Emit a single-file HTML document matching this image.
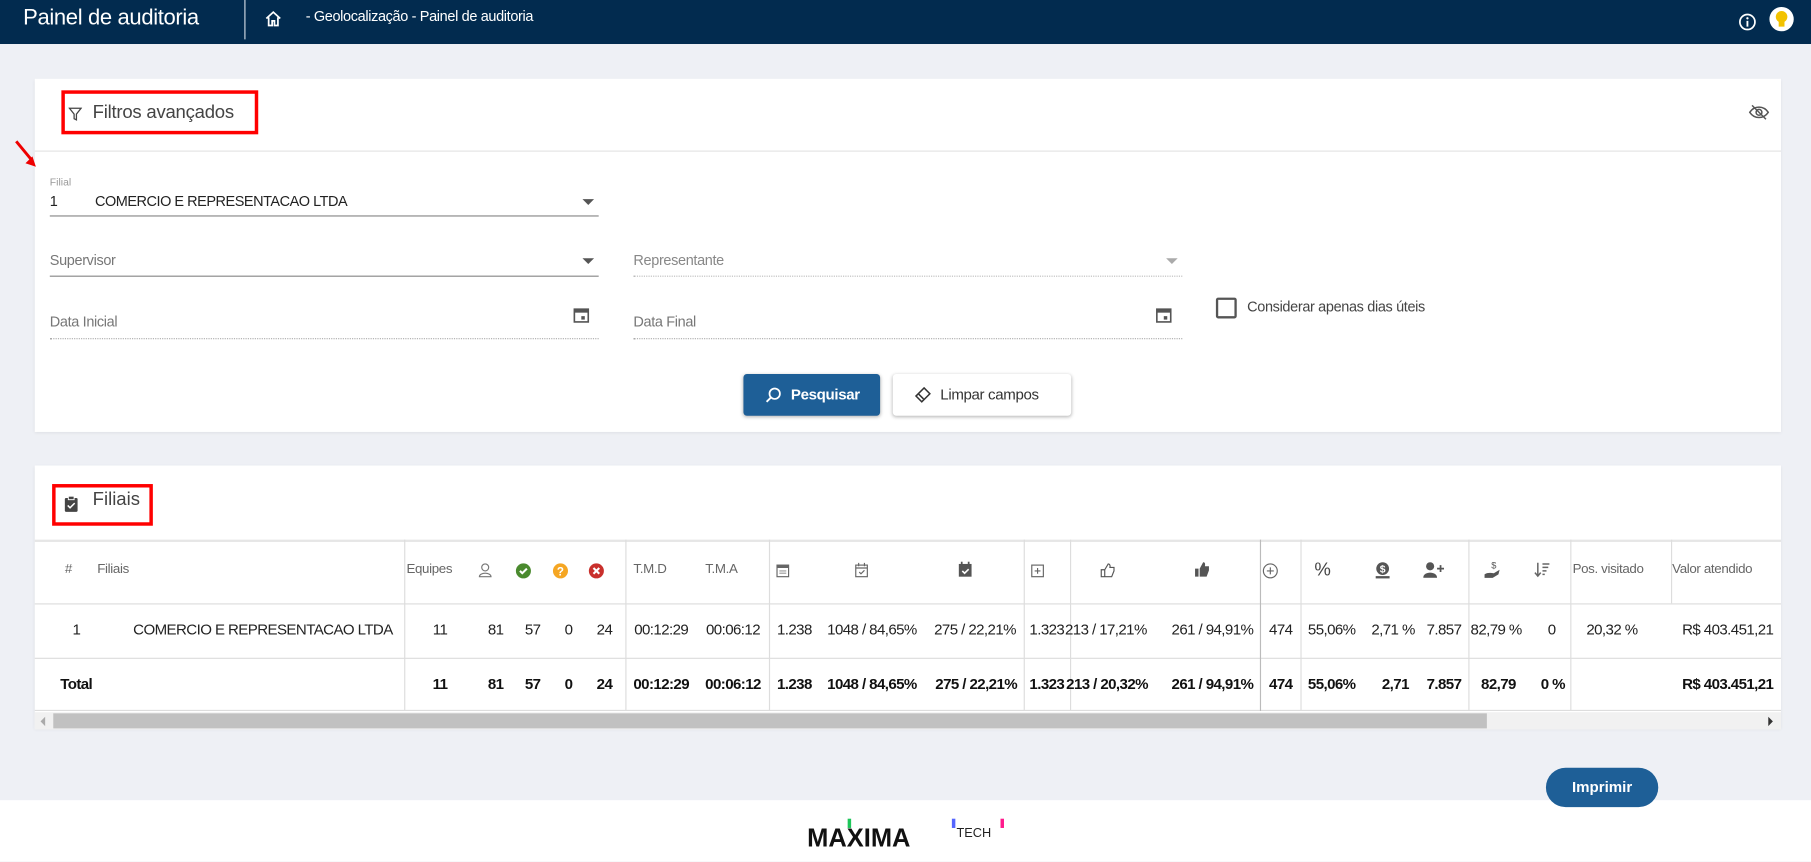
<!DOCTYPE html>
<html><head><meta charset="utf-8"><style>
*{margin:0;padding:0;box-sizing:border-box}
html,body{width:1811px;height:861px;overflow:hidden;background:#eef0f5;font-family:"Liberation Sans",sans-serif}
#w{position:absolute;left:0;top:0;width:1564px;height:744px;transform:scale(1.158);transform-origin:0 0;background:#eef0f5}
.a{position:absolute;white-space:nowrap}
.c{position:absolute;width:120px;text-align:center;white-space:nowrap}
.hd{font-size:11.5px;color:#666;letter-spacing:-0.3px}
.r1{font-size:13px;color:#222;letter-spacing:-0.5px}
.r2{font-size:13px;color:#111;font-weight:bold;letter-spacing:-0.5px}
.vl{position:absolute;width:1px;background:#ddd;top:466px;height:148px}
</style></head><body><div id="w">
<!-- header -->
<div class="a" style="left:0;top:0;width:1564px;height:38px;background:#022b4f"></div>
<div class="a" style="left:20px;top:5px;font-size:19px;color:#fff;letter-spacing:-0.3px">Painel de auditoria</div>
<div class="a" style="left:211px;top:0;width:1px;height:34px;background:#cfd8e3"></div>
<svg class="a" style="left:228px;top:8px" width="16" height="16" viewBox="0 0 16 16"><path d="M2 8L8 2.5 14 8M4 7v7h3v-4h2v4h3V7" fill="none" stroke="#fff" stroke-width="1.5"/></svg>
<div class="a" style="left:264px;top:7px;font-size:12.5px;color:#fff;letter-spacing:-0.3px">- Geolocalização - Painel de auditoria</div>
<svg class="a" style="left:1501px;top:11px" width="16" height="16"><circle cx="8" cy="8" r="6.5" fill="none" stroke="#fff" stroke-width="1.5"/><rect x="7.2" y="7" width="1.6" height="5" fill="#fff"/><circle cx="8" cy="4.8" r="1" fill="#fff"/></svg>
<div class="a" style="left:1528px;top:6px;width:21px;height:21px;border-radius:50%;background:#fff"></div>
<svg class="a" style="left:1532px;top:9px" width="13" height="15"><circle cx="6.5" cy="5.5" r="5" fill="#f2c200"/><rect x="4" y="9" width="5" height="5" fill="#f2c200"/></svg>

<!-- card 1 -->
<div class="a" style="left:30px;top:68px;width:1508px;height:305px;background:#fff;box-shadow:0 1px 3px rgba(0,0,0,.08)"></div>
<div class="a" style="left:30px;top:130px;width:1508px;height:1px;background:#e3e3e3"></div>
<div class="a" style="left:53px;top:78px;width:170px;height:38px;border:3px solid #f00"></div>
<svg class="a" style="left:59px;top:92px" width="12" height="13"><path d="M1 1.5h10L7 6.5v5l-2-1V6.5z" fill="none" stroke="#444" stroke-width="1.1"/></svg>
<div class="a" style="left:80px;top:89px;font-size:16px;color:#444;letter-spacing:-0.2px">Filtros avançados</div>
<svg class="a" style="left:1510px;top:90px" width="18" height="14"><path d="M1 7c4-6 12-6 16 0c-4 6-12 6-16 0z" fill="none" stroke="#555" stroke-width="1.3"/><circle cx="9" cy="7" r="2.5" fill="none" stroke="#555" stroke-width="1.3"/><path d="M3 1l12 12" stroke="#555" stroke-width="1.3"/></svg>
<svg class="a" style="left:12px;top:120px" width="22" height="26"><path d="M2 2l14 17" stroke="#e00" stroke-width="2.5"/><path d="M19 24l-9-3 6-6z" fill="#e00"/></svg>
<div class="a" style="left:43px;top:152px;font-size:9px;color:#999">Filial</div>
<div class="a" style="left:43px;top:167px;font-size:12.5px;color:#222">1</div>
<div class="a" style="left:82px;top:167px;font-size:12.5px;color:#222;letter-spacing:-0.4px">COMERCIO E REPRESENTACAO LTDA</div>
<div class="a" style="left:503px;top:172px;border:5px solid transparent;border-top:5px solid #555"></div>
<div class="a" style="left:43px;top:186px;width:474px;height:1px;background:#888"></div>
<div class="a" style="left:43px;top:218px;font-size:12.5px;color:#777;letter-spacing:-0.3px">Supervisor</div>
<div class="a" style="left:503px;top:223px;border:5px solid transparent;border-top:5px solid #555"></div>
<div class="a" style="left:43px;top:238px;width:474px;height:1px;background:#888"></div>
<div class="a" style="left:547px;top:218px;font-size:12.5px;color:#888;letter-spacing:-0.3px">Representante</div>
<div class="a" style="left:1007px;top:223px;border:5px solid transparent;border-top:5px solid #aaa"></div>
<div class="a" style="left:547px;top:238px;width:474px;height:0;border-top:1px dotted #bbb"></div>
<div class="a" style="left:43px;top:271px;font-size:12.5px;color:#777;letter-spacing:-0.3px">Data Inicial</div>
<div class="a" style="left:43px;top:292px;width:474px;height:0;border-top:1px dotted #aaa"></div>
<div class="a" style="left:547px;top:271px;font-size:12.5px;color:#777;letter-spacing:-0.3px">Data Final</div>
<div class="a" style="left:547px;top:292px;width:474px;height:0;border-top:1px dotted #aaa"></div>
<svg class="a" style="left:495px;top:265px" width="14" height="14"><rect x="1" y="2" width="12" height="11" fill="none" stroke="#555" stroke-width="1.4"/><rect x="1" y="2" width="12" height="3" fill="#555"/><rect x="7" y="8" width="3" height="3" fill="#555"/></svg>
<svg class="a" style="left:998px;top:265px" width="14" height="14"><rect x="1" y="2" width="12" height="11" fill="none" stroke="#555" stroke-width="1.4"/><rect x="1" y="2" width="12" height="3" fill="#555"/><rect x="7" y="8" width="3" height="3" fill="#555"/></svg>
<div class="a" style="left:1050px;top:257px;width:18px;height:18px;border:2px solid #555;border-radius:2px"></div>
<div class="a" style="left:1077px;top:258px;font-size:12.5px;color:#444;letter-spacing:-0.3px">Considerar apenas dias úteis</div>
<div class="a" style="left:642px;top:323px;width:118px;height:36px;background:#1e5f97;border-radius:3px;box-shadow:0 1px 3px rgba(0,0,0,.3)"></div>
<svg class="a" style="left:661px;top:334px" width="14" height="14"><circle cx="8" cy="6" r="4.5" fill="none" stroke="#fff" stroke-width="1.5"/><path d="M5 9l-4 4" stroke="#fff" stroke-width="1.6"/></svg>
<div class="a" style="left:683px;top:333px;font-size:13px;color:#fff;font-weight:bold;letter-spacing:-0.3px">Pesquisar</div>
<div class="a" style="left:771px;top:323px;width:154px;height:36px;background:#fff;border-radius:3px;box-shadow:0 1px 3px rgba(0,0,0,.3)"></div>
<svg class="a" style="left:790px;top:334px" width="14" height="14"><path d="M8 1l5 5-7 7-5-5z M3.5 6.5l4 4" fill="none" stroke="#333" stroke-width="1.3"/></svg>
<div class="a" style="left:812px;top:333px;font-size:13px;color:#333;letter-spacing:-0.3px">Limpar campos</div>

<!-- card 2 -->
<div class="a" style="left:30px;top:402px;width:1508px;height:227px;background:#fff;box-shadow:0 1px 3px rgba(0,0,0,.08)"></div>
<div class="a" style="left:45px;top:418px;width:87px;height:36px;border:3px solid #f00"></div>
<svg class="a" style="left:55px;top:428px" width="13" height="15"><rect x="1" y="2" width="11" height="12" rx="1" fill="#444"/><rect x="4" y="0.5" width="5" height="3" fill="#444" stroke="#fff" stroke-width=".8"/><path d="M3.5 8.5l2 2 4-4" fill="none" stroke="#fff" stroke-width="1.3"/></svg>
<div class="a" style="left:80px;top:423px;font-size:16px;color:#444">Filiais</div>
<div class="a" style="left:30px;top:466px;width:1508px;height:2px;background:#e6e6e6"></div>
<div class="a" style="left:30px;top:521px;width:1508px;height:1px;background:#ddd"></div>
<div class="a" style="left:30px;top:568px;width:1508px;height:1px;background:#ddd"></div>
<div class="a" style="left:30px;top:613px;width:1508px;height:1px;background:#ddd"></div>
<div class="vl" style="left:349px"></div><div class="vl" style="left:540px"></div><div class="vl" style="left:664px"></div><div class="vl" style="left:884px"></div><div class="vl" style="left:924px"></div><div class="vl" style="left:1088px;background:#bbb"></div><div class="vl" style="left:1123px"></div><div class="vl" style="left:1268px"></div><div class="vl" style="left:1356px"></div><div class="vl" style="left:1443px;height:55px"></div>
<!-- header row -->
<div class="a hd" style="left:56px;top:486px">#</div>
<div class="a hd" style="left:84px;top:486px">Filiais</div>
<div class="a hd" style="left:351px;top:486px">Equipes</div>
<svg class="a" style="left:413px;top:486px" width="12" height="13"><circle cx="6" cy="4" r="3" fill="none" stroke="#777"/><path d="M1 12c0-4 10-4 10 0z" fill="none" stroke="#777"/></svg>
<svg class="a" style="left:445px;top:486px" width="14" height="14"><circle cx="7" cy="7" r="6.5" fill="#4a8a2e"/><path d="M4 7l2 2 4-4" stroke="#fff" stroke-width="1.8" fill="none"/></svg>
<svg class="a" style="left:477px;top:486px" width="14" height="14"><circle cx="7" cy="7" r="6.5" fill="#f5a623"/><text x="7" y="11" font-size="10" font-weight="bold" fill="#fff" text-anchor="middle" font-family="Liberation Sans">?</text></svg>
<svg class="a" style="left:508px;top:486px" width="14" height="14"><circle cx="7" cy="7" r="6.5" fill="#c9302c"/><path d="M4.5 4.5l5 5M9.5 4.5l-5 5" stroke="#fff" stroke-width="1.8"/></svg>
<div class="a hd" style="left:547px;top:486px">T.M.D</div>
<div class="a hd" style="left:609px;top:486px">T.M.A</div>
<svg class="a" style="left:670px;top:487px" width="12" height="12"><rect x="1" y="1" width="10" height="10" fill="none" stroke="#666"/><rect x="1" y="1" width="10" height="2.5" fill="#666"/><path d="M3 6h6M3 8h6" stroke="#999"/></svg>
<svg class="a" style="left:738px;top:486px" width="12" height="13"><rect x="1" y="2" width="10" height="10" fill="none" stroke="#666"/><path d="M1 4.5h10M3.5 0v3M8.5 0v3M4 8l1.5 1.5 3-3" stroke="#666" fill="none"/></svg>
<svg class="a" style="left:827px;top:485px" width="13" height="14"><rect x="1" y="2" width="11" height="11" fill="#555"/><path d="M3.5 0v3M9.5 0v3" stroke="#555" stroke-width="1.5"/><path d="M4 8l2 2 3.5-3.5" stroke="#fff" stroke-width="1.4" fill="none"/></svg>
<svg class="a" style="left:890px;top:487px" width="12" height="12"><rect x="1" y="1" width="10" height="10" fill="none" stroke="#666"/><path d="M6 3.5v5M3.5 6h5" stroke="#666"/></svg>
<svg class="a" style="left:950px;top:486px" width="13" height="13"><path d="M1 6h3v6H1zM4 6l3-5c1 0 2 1 1.5 3H12v3l-2 5H4" fill="none" stroke="#555"/></svg>
<svg class="a" style="left:1031px;top:485px" width="14" height="14"><path d="M1 6h3v7H1zM5 6l3-5.5c1.5 0 2 1 1.5 3.5H13v3.5l-2 5.5H5z" fill="#555"/></svg>
<svg class="a" style="left:1090px;top:486px" width="14" height="14"><circle cx="7" cy="7" r="6" fill="none" stroke="#666"/><path d="M7 4v6M4 7h6" stroke="#666"/></svg>
<div class="a" style="left:1135px;top:484px;font-size:16px;color:#444">%</div>
<svg class="a" style="left:1187px;top:485px" width="14" height="15"><circle cx="7" cy="6" r="5.5" fill="#555"/><text x="7" y="9.5" font-size="9" font-weight="bold" fill="#fff" text-anchor="middle" font-family="Liberation Sans">$</text><rect x="1" y="12.5" width="12" height="2" fill="#555"/></svg>
<svg class="a" style="left:1229px;top:485px" width="18" height="14"><circle cx="6" cy="4" r="3.5" fill="#555"/><path d="M0 14c0-6 12-6 12 0z" fill="#555"/><path d="M15 3v6M12 6h6" stroke="#555" stroke-width="1.5"/></svg>
<svg class="a" style="left:1281px;top:484px" width="16" height="16"><path d="M1 12c3-2 6-1 8-1l5-3-1 4-5 3H1z" fill="#555"/><text x="9" y="7" font-size="8" fill="#555" text-anchor="middle" font-family="Liberation Sans">$</text></svg>
<svg class="a" style="left:1325px;top:485px" width="14" height="14"><path d="M3 1v11M0.5 9.5L3 12.5 5.5 9.5" stroke="#666" fill="none" stroke-width="1.3"/><path d="M7 2h6M7 5h5M7 8h3.5M7 11h2" stroke="#666" stroke-width="1.3"/></svg>
<div class="a hd" style="left:1358px;top:486px">Pos. visitado</div>
<div class="a hd" style="left:1444px;top:486px">Valor atendido</div>
<!-- row1 -->
<div class="c r1" style="left:6px;top:536px">1</div>
<div class="a r1" style="left:115px;top:536px">COMERCIO E REPRESENTACAO LTDA</div>
<div class="c r1" style="left:320px;top:536px">11</div><div class="c r1" style="left:368px;top:536px">81</div><div class="c r1" style="left:400px;top:536px">57</div><div class="c r1" style="left:431px;top:536px">0</div><div class="c r1" style="left:462px;top:536px">24</div>
<div class="c r1" style="left:511px;top:536px">00:12:29</div><div class="c r1" style="left:573px;top:536px">00:06:12</div><div class="c r1" style="left:626px;top:536px">1.238</div><div class="c r1" style="left:693px;top:536px">1048 / 84,65%</div><div class="c r1" style="left:782px;top:536px">275 / 22,21%</div><div class="c r1" style="left:844px;top:536px">1.323</div><div class="c r1" style="left:895px;top:536px">213 / 17,21%</div><div class="c r1" style="left:987px;top:536px">261 / 94,91%</div><div class="c r1" style="left:1046px;top:536px">474</div><div class="c r1" style="left:1090px;top:536px">55,06%</div><div class="c r1" style="left:1143px;top:536px">2,71 %</div><div class="c r1" style="left:1187px;top:536px">7.857</div><div class="c r1" style="left:1232px;top:536px">82,79 %</div><div class="c r1" style="left:1280px;top:536px">0</div><div class="c r1" style="left:1332px;top:536px">20,32 %</div><div class="c r1" style="left:1432px;top:536px">R$ 403.451,21</div>
<!-- total -->
<div class="a r2" style="left:52px;top:583px">Total</div>
<div class="c r2" style="left:320px;top:583px">11</div><div class="c r2" style="left:368px;top:583px">81</div><div class="c r2" style="left:400px;top:583px">57</div><div class="c r2" style="left:431px;top:583px">0</div><div class="c r2" style="left:462px;top:583px">24</div>
<div class="c r2" style="left:511px;top:583px">00:12:29</div><div class="c r2" style="left:573px;top:583px">00:06:12</div><div class="c r2" style="left:626px;top:583px">1.238</div><div class="c r2" style="left:693px;top:583px">1048 / 84,65%</div><div class="c r2" style="left:783px;top:583px">275 / 22,21%</div><div class="c r2" style="left:844px;top:583px">1.323</div><div class="c r2" style="left:896px;top:583px">213 / 20,32%</div><div class="c r2" style="left:987px;top:583px">261 / 94,91%</div><div class="c r2" style="left:1046px;top:583px">474</div><div class="c r2" style="left:1090px;top:583px">55,06%</div><div class="c r2" style="left:1145px;top:583px">2,71</div><div class="c r2" style="left:1187px;top:583px">7.857</div><div class="c r2" style="left:1234px;top:583px">82,79</div><div class="c r2" style="left:1281px;top:583px">0 %</div><div class="c r2" style="left:1432px;top:583px">R$ 403.451,21</div>
<!-- scrollbar -->
<div class="a" style="left:30px;top:615px;width:1508px;height:15px;background:#f1f1f1"></div>
<div class="a" style="left:46px;top:616px;width:1238px;height:13px;background:#c1c1c1"></div>
<div class="a" style="left:35px;top:619px;border:4px solid transparent;border-right:4px solid #aaa;border-left:0"></div>
<div class="a" style="left:1527px;top:619px;border:4px solid transparent;border-left:4px solid #333;border-right:0"></div>

<!-- footer -->
<div class="a" style="left:0;top:691px;width:1564px;height:53px;background:#fff"></div>
<div class="a" style="left:1335px;top:663px;width:97px;height:34px;background:#1e5f97;border-radius:17px;color:#fff;font-size:13px;font-weight:bold;text-align:center;line-height:34px">Imprimir</div>
<div class="a" style="left:697px;top:711px;font-size:22px;font-weight:bold;color:#111;letter-spacing:0">MAXIMA</div>
<div class="a" style="left:826px;top:714px;font-size:11px;color:#222">TECH</div>
<div class="a" style="left:732px;top:707px;width:3px;height:8px;background:#1ec65a"></div>
<div class="a" style="left:822px;top:707px;width:3px;height:8px;background:#5566ff"></div>
<div class="a" style="left:864px;top:707px;width:3px;height:8px;background:#ff1a8c"></div>
</div></body></html>
